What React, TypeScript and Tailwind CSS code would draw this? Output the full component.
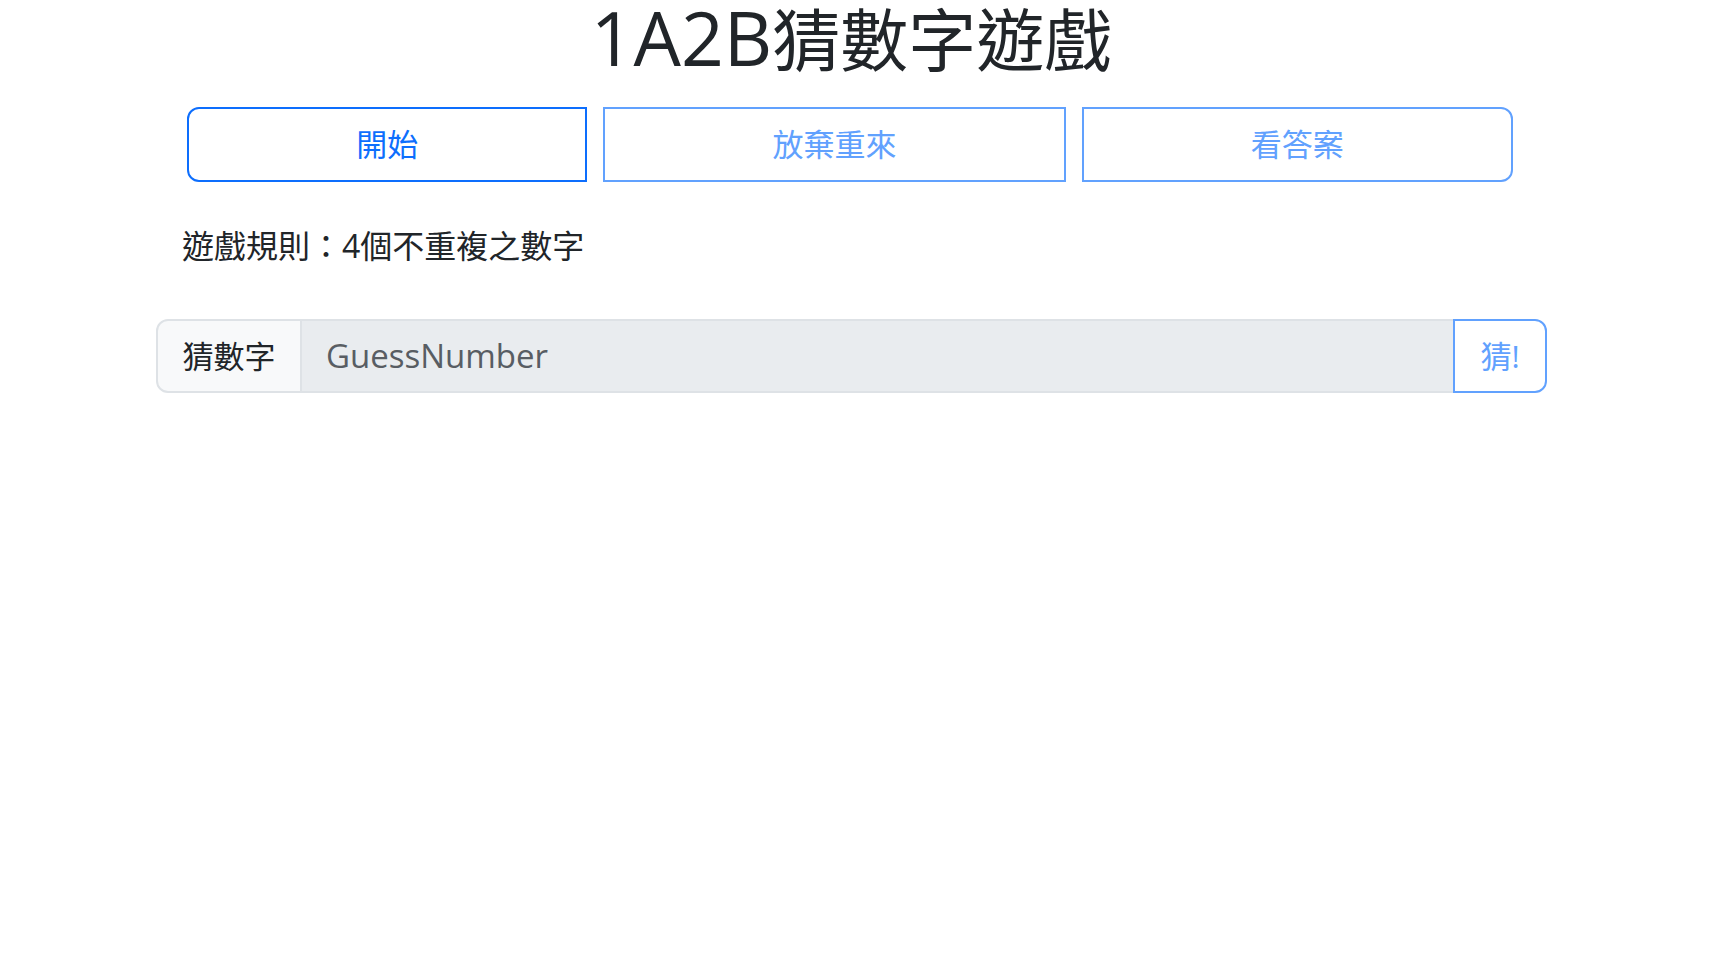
const font = "font-['Open_Sans','Noto_Sans_CJK_TC',sans-serif]";

export default function App() {
    return (<div className={`w-full min-h-[968px] bg-white text-[#212529] ${font}`}>
        <div className="ml-[156px] w-[1391px] flex flex-col">
            <h1 className="m-0 -mt-[5px] h-[84px] text-center text-[68px] leading-[84px] font-normal">
                <span className="text-[75px]">1A2B</span>猜數字遊戲
            </h1>
            <div className="flex flex-row gap-4 mt-[28px] ml-[31px] mr-[34px]">
                <button className="flex-auto h-[75px] border-2 border-[#0d6efd] text-[#0d6efd] rounded-l-[12px] bg-white text-[31px] px-4">
                    開始
                </button>
                <button className="flex-auto h-[75px] border-2 border-[#61a1fe] text-[#61a1fe] bg-white text-[31px] px-4">
                    放棄重來
                </button>
                <button className="flex-auto h-[75px] border-2 border-[#61a1fe] text-[#61a1fe] rounded-r-[12px] bg-white text-[31px] px-4">
                    看答案
                </button>
            </div>
            <p className="mt-[40px] ml-[26px] text-[32px] leading-[48px]">遊戲規則：4個不重複之數字</p>
            <div className="flex flex-row mt-[49px] h-[74px]">
                <span className="flex items-center justify-center w-[146px] bg-[#f8f9fa] border-2 border-[#dee2e6] rounded-l-[12px] text-[31px]">
                    猜數字
                </span>
                <div className="flex items-center flex-1 bg-[#e9ecef] border-y-2 border-[#dee2e6] pl-[24px] text-[33px] text-[#585d63]">
                    GuessNumber
                </div>
                <button className="w-[94px] border-2 border-[#61a1fe] text-[#61a1fe] bg-white rounded-r-[12px] text-[31px]">
                    猜!
                </button>
            </div>
        </div>
    </div>);
}
